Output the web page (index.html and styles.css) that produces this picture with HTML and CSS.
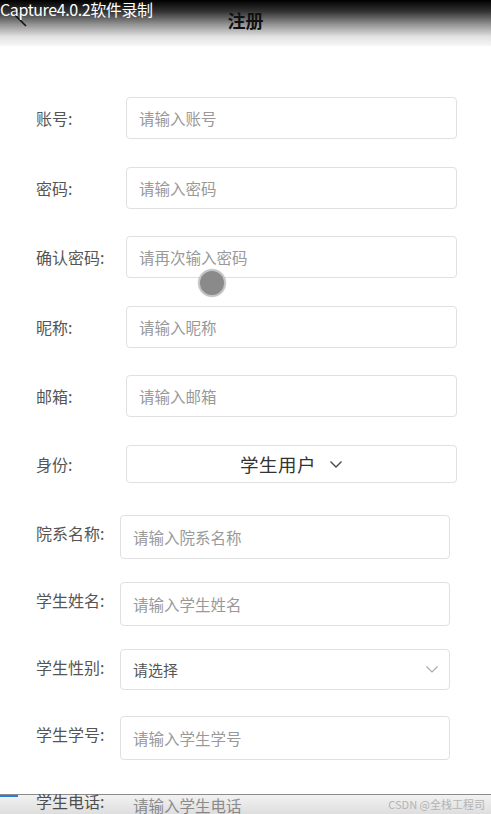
FILE: index.html
```html
<!DOCTYPE html>
<html lang="zh-CN">
<head>
<meta charset="utf-8">
<title>注册</title>
<link rel="stylesheet" href="styles.css">
</head>
<body>
<div class="rec-mark">Capture4.0.2软件录制</div>
<header class="header">
  <svg class="back" width="30" height="30" viewBox="0 0 30 30"><polyline points="26,4 15,15 26,26" fill="none" stroke="#111" stroke-width="1.6"/></svg>
  <h1 class="title">注册</h1>
</header>
<main class="form">
  <section class="group group-a">
    <div class="row"><label class="label">账号:</label><input class="field" placeholder="请输入账号"></div>
    <div class="row"><label class="label">密码:</label><input class="field" type="password" placeholder="请输入密码"></div>
    <div class="row"><label class="label">确认密码:</label><input class="field" type="password" placeholder="请再次输入密码"></div>
    <div class="row"><label class="label">昵称:</label><input class="field" placeholder="请输入昵称"></div>
    <div class="row"><label class="label">邮箱:</label><input class="field" placeholder="请输入邮箱"></div>
    <div class="row row-role"><label class="label">身份:</label>
      <div class="picker"><span>学生用户</span>
        <svg width="14" height="14" viewBox="0 0 14 14"><polyline points="1.5,4.5 7,10 12.5,4.5" fill="none" stroke="#444" stroke-width="1.3"/></svg>
      </div>
    </div>
  </section>
  <section class="group group-b">
    <div class="row"><label class="label">院系名称:</label><input class="field" placeholder="请输入院系名称"></div>
    <div class="row"><label class="label">学生姓名:</label><input class="field" placeholder="请输入学生姓名"></div>
    <div class="row row-select"><label class="label">学生性别:</label>
      <div class="field select"><span>请选择</span>
        <svg width="14" height="14" viewBox="0 0 14 14"><polyline points="1.5,4.5 7,10 12.5,4.5" fill="none" stroke="#aaa" stroke-width="1.2"/></svg>
      </div>
    </div>
    <div class="row"><label class="label">学生学号:</label><input class="field" placeholder="请输入学生学号"></div>
    <div class="row row-last"><label class="label">学生电话:</label><input class="field" placeholder="请输入学生电话"></div>
  </section>
</main>
<div class="touch"></div>
<div class="taskbar"><span class="blue"></span><span class="csdn">CSDN @全栈工程司</span></div>
</body>
</html>
```
FILE: styles.css
```css
* { box-sizing: border-box; }
html, body { margin: 0; padding: 0; background: #fff; }
body {
  font-family: "Noto Sans CJK SC", "Noto Sans", "Liberation Sans", sans-serif;
  color: #333;
  overflow: hidden;
  height: 814px;
}
.rec-mark {
  position: absolute;
  left: 0;
  top: 0;
  font-family: "Noto Sans CJK SC", sans-serif;
  font-size: 16px;
  line-height: 18px;
  color: #fff;
  z-index: 5;
  letter-spacing: -0.4px;
}
.header {
  height: 46px;
  display: flex;
  align-items: center;
  justify-content: center;
  position: relative;
  background: linear-gradient(#000 0%, #333 25%, #999 55%, #e2e2e2 80%, #f7f7f7 100%);
}
.back { position: absolute; left: 0; top: 0; }
.title {
  margin: 0;
  font-size: 18px;
  font-weight: bold;
  color: #111;
  line-height: 24px;
  margin-top: -6px;
}
.form { padding-top: 51px; }
.group { display: flex; flex-direction: column; }
.group-a { padding: 0 34px 0 36px; gap: 27.6px; }
.group-b { padding: 0 41px 0 36px; gap: 23px; margin-top: 32px; }
.row { display: flex; align-items: center; }
.label {
  font-size: 16px;
  line-height: 22px;
  color: #555;
  flex: none;
}
.group-a .label { width: 90px; }
.group-b .label { width: 84px; align-self: flex-start; padding-top: 7px; }
.field {
  flex: 1;
  min-width: 0;
  height: 42px;
  border: 1px solid #e0e0e0;
  border-radius: 4px;
  padding: 0 12px;
  font-family: inherit;
  font-size: 15.5px;
  color: #333;
  background: #fff;
  outline: none;
}
.group-b .field { height: 44px; }
.field::placeholder { color: #999; }
.row-role .picker {
  flex: 1;
  height: 38px;
  border: 1px solid #e0e0e0;
  border-radius: 4px;
  display: flex;
  align-items: center;
  justify-content: center;
  gap: 13px;
  font-size: 18.5px;
  letter-spacing: 0.5px;
  color: #333;
}
.row-select { height: 44px; align-items: flex-start; }
.group-b .select {
  height: 41px;
  display: flex;
  align-items: center;
  justify-content: space-between;
  color: #555;
  font-size: 15px;
  padding-right: 10px;
}
.row-last .field { border-color: transparent; }
.touch {
  position: absolute;
  left: 198px;
  top: 269px;
  width: 28px;
  height: 28px;
  border-radius: 50%;
  background: #8a8a8a;
  border: 2px solid #c4c4c4;
  box-shadow: 0 0 2px rgba(0,0,0,0.1);
}
.taskbar {
  position: fixed;
  left: 0;
  right: 0;
  bottom: 0;
  height: 20px;
  border-top: 1px solid #8c8c8c;
  background: linear-gradient(#f2f2f2, #dedede);
  mix-blend-mode: multiply;
}
.taskbar .blue {
  position: absolute;
  left: 0;
  top: 0;
  width: 18px;
  height: 2px;
  background: #2a7bdc;
}
.taskbar .csdn {
  position: absolute;
  right: 6px;
  top: 2px;
  font-size: 11px;
  line-height: 14px;
  color: #b4b4b4;
}
```
